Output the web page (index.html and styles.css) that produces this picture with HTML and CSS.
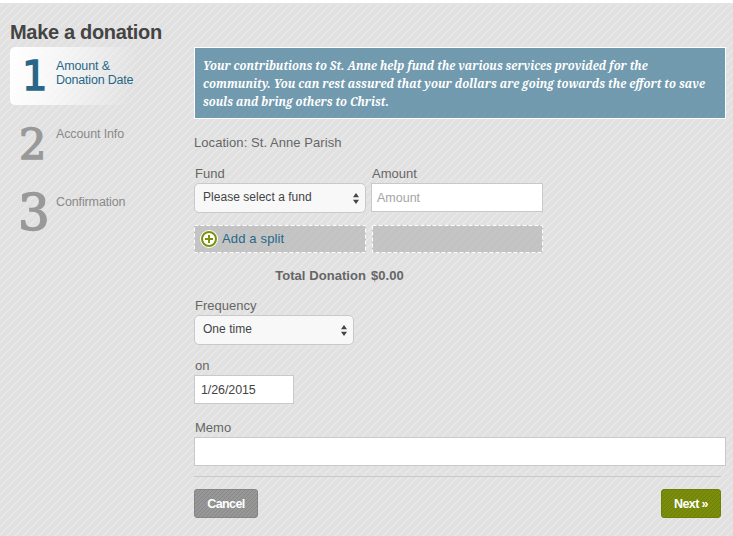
FILE: index.html
```html
<!DOCTYPE html>
<html lang="en">
<head>
<meta charset="utf-8">
<title>Make a donation</title>
<link rel="stylesheet" href="styles.css">
</head>
<body>
<div class="page">
  <h1><span>Make a donation</span></h1>
  <div class="layout">
    <ol class="steps">
      <li class="step active"><span class="num one">1</span><span class="name">Amount &amp;<br><span class="date-line">Donation Date</span></span></li>
      <li class="step"><span class="num two">2</span><span class="name">Account Info</span></li>
      <li class="step"><span class="num three">3</span><span class="name">Confirmation</span></li>
    </ol>
    <form class="form">
      <div class="message">
        <div class="line">Your contributions to St. Anne help fund the various services provided for the</div>
        <div class="line wide">community. You can rest assured that your dollars are going towards the effort to save</div>
        <div class="line">souls and bring others to Christ.</div>
      </div>
      <div class="location">Location: St. Anne Parish</div>
      <div class="funds">
        <label>Fund</label>
        <label class="amount-label">Amount</label>
        <div class="select"><span>Please select a fund</span>
          <svg class="arrows" viewBox="0 0 6 11"><path d="M0 4.3 3 0l3 4.3zM0 6.7h6L3 11z"/></svg></div>
        <div class="input placeholder">Amount</div>
      </div>
      <div class="split">
        <div class="dashed">
          <svg class="edge"><rect x=".5" y=".5" width="171" height="27"/></svg>
          <svg class="plus" viewBox="0 0 18 18"><circle cx="9" cy="9" r="9" fill="#fff"/><circle cx="9" cy="9" r="7" fill="#fff" stroke="#7b9210" stroke-width="2"/><path d="M9 5v8M5 9h8" stroke="#7b9210" stroke-width="2"/></svg>
          <a>Add a split</a>
        </div>
        <div class="dashed"><svg class="edge"><rect x=".5" y=".5" width="170" height="27"/></svg></div>
      </div>
      <div class="total"><span class="total-name">Total Donation</span><span class="total-sum">$0.00</span></div>
      <label class="frequency">Frequency</label>
      <div class="select short"><span>One time</span>
        <svg class="arrows" viewBox="0 0 6 11"><path d="M0 4.3 3 0l3 4.3zM0 6.7h6L3 11z"/></svg></div>
      <label class="on">on</label>
      <div class="input date">1/26/2015</div>
      <label class="memo-label">Memo</label>
      <div class="input memo"></div>
      <div class="actions">
        <div class="button cancel">Cancel</div>
        <div class="button next">Next »</div>
      </div>
    </form>
  </div>
</div>
</body>
</html>
```
FILE: styles.css
```css
* { box-sizing: border-box; }
body { margin: 0; padding-top: 3px; background: #fff; font-family: "Liberation Sans", Arial, sans-serif; font-size: 13px; line-height: 16px; color: #666; }
.page {
  height: 533px; padding: 17px 7px 0 10px; overflow: hidden;
  background: #e1e1e1 linear-gradient(135deg, transparent 0 18%, #ececec 25%, transparent 32% 68%, #ececec 75%, transparent 82%) 0 0 / 8px 8px;
}
h1 { margin: 0; height: 27px; font-size: 20px; line-height: 24px; letter-spacing: -.32px; color: #444; }
.layout { display: flex; gap: 24px; }
.steps { list-style: none; margin: 0; padding: 0; width: 160px; flex: none; }
.step { display: flex; height: 58px; margin-bottom: 10px; border-radius: 5px; color: #8a8a8a; }
.active { color: #286788; background: linear-gradient(100deg, #fff 0, rgba(255,255,255,.7) 30%, rgba(255,255,255,0) 76%); }
.num { width: 46px; flex: none; font-family: "DejaVu Serif", serif; color: #999; -webkit-text-stroke: 1.5px #999; }
.one { font-family: "DejaVu Sans", sans-serif; color: #286788; -webkit-text-stroke: 1.4px #286788; font-size: 40px; line-height: 58px; padding-left: 12px; }
.two { font-size: 43px; line-height: 58px; padding-left: 9px; }
.three { font-size: 50px; line-height: 60px; padding-left: 8px; }
.name { padding-top: 12px; font-size: 12.5px; line-height: 14px; letter-spacing: -.12px; }
.date-line { letter-spacing: -.2px; }
.form { width: 532px; flex: none; }
.message { height: 72px; border: 1px solid #fff; padding: 8px 8px; background: rgba(77,132,158,.76); color: #fff; font: italic bold 13px/18px "Noto Serif", "Droid Serif", "DejaVu Serif Condensed", "DejaVu Serif", serif; white-space: nowrap; }
.line { width: max-content; transform: scaleX(.864); transform-origin: left center; }
.wide { transform: scaleX(.869); }
.location { margin-top: 16px; height: 16px; letter-spacing: .06px; }
.funds { display: grid; grid-template-columns: 172px 172px; column-gap: 5px; margin-top: 15px; }
label { display: block; height: 17px; line-height: 16px; padding-left: 1px; }
.select { position: relative; display: flex; justify-content: space-between; align-items: center; width: 172px; height: 30px; border: 1px solid #c9c9c9; border-radius: 5px; background: #f8f8f8; color: #444; padding: 0 6px 2px 8px; font-size: 12px; letter-spacing: .03px; }
.short { width: 160px; }
.arrows { width: 6px; height: 11px; fill: #444; margin-top: 2px; }
.input { width: 172px; height: 29px; border: 1px solid #c9c9c9; background: #fff; padding: 0 5px; font-size: 12.5px; line-height: 28px; color: #444; }
.placeholder { color: #a5a5a5; }
.date { width: 100px; padding-left: 6px; letter-spacing: -.1px; }
.split { display: grid; grid-template-columns: 172px 171px; gap: 6px; margin-top: 12px; }
.dashed { position: relative; display: flex; align-items: center; height: 28px; padding-left: 6px; background: rgba(150,150,150,.4); color: #286788; letter-spacing: .15px; }
.edge { position: absolute; inset: 0; width: 100%; height: 100%; fill: none; stroke: #fff; stroke-dasharray: 4 2; }
.plus { width: 18px; height: 18px; margin-right: 4px; }
.total { display: flex; gap: 5px; margin-top: 15px; height: 16px; font-weight: bold; letter-spacing: .06px; }
.total-name { width: 172px; text-align: right; }
.frequency { margin-top: 14px; }
.on { margin-top: 13px; }
.memo-label { margin-top: 16px; }
.memo { width: 532px; }
.actions { display: flex; justify-content: space-between; width: 527px; margin-top: 10px; border-top: 1px solid #c9c9c9; padding-top: 12px; }
.button { height: 29px; border-radius: 3px; color: #fff; font-size: 12.5px; text-align: center; font-weight: bold; letter-spacing: -.6px; background-image: linear-gradient(135deg, transparent 0 15%, rgba(0,0,0,.1) 25%, transparent 35% 65%, rgba(0,0,0,.1) 75%, transparent 85%); background-size: 4px 4px; line-height: 28px; }
.cancel { width: 64px; background-color: #979797; border: 1px solid #858585; }
.next { width: 60px; background-color: #7b8e0b; border: 1px solid #6e800a; }
```
